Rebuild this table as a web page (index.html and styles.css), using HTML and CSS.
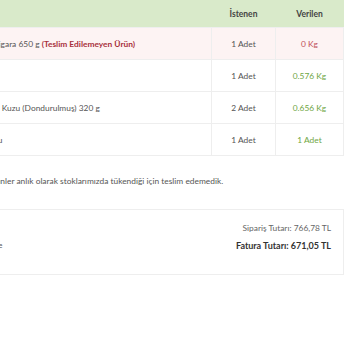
FILE: index.html
```html
<!DOCTYPE html>
<html lang="tr">
<head>
<meta charset="utf-8">
<link rel="stylesheet" href="styles.css">
</head>
<body>
<div class="viewport">
  <div class="page">
    <table class="items">
      <colgroup>
        <col class="col-name">
        <col class="col-qty">
        <col class="col-given">
      </colgroup>
      <thead>
        <tr>
          <th class="c-name">Ürün</th>
          <th class="c-qty">İstenen</th>
          <th class="c-given">Verilen</th>
        </tr>
      </thead>
      <tbody>
        <tr class="missing">
          <td class="c-name">Kuzu Ciğerli Sigara 650 g <b class="miss-tag">(Teslim Edilemeyen Ürün)</b></td>
          <td class="c-qty">1 Adet</td>
          <td class="c-given red">0 Kg</td>
        </tr>
        <tr>
          <td class="c-name">Dana Kıyma</td>
          <td class="c-qty">1 Adet</td>
          <td class="c-given green">0.576 Kg</td>
        </tr>
        <tr>
          <td class="c-name">Kemiksiz İncik Kuzu (Dondurulmuş) 320 g</td>
          <td class="c-qty">2 Adet</td>
          <td class="c-given green">0.656 Kg</td>
        </tr>
        <tr>
          <td class="c-name">İnce Kaya Tuzu</td>
          <td class="c-qty">1 Adet</td>
          <td class="c-given green">1 Adet</td>
        </tr>
      </tbody>
    </table>
    <p class="note">Yukarıdaki ürünler anlık olarak stoklarımızda tükendiği için teslim edemedik.</p>
    <div class="summary">
      <div class="sum-left">
        <div class="line">Ödeme:</div>
        <div class="line">Kapıda Ödeme</div>
      </div>
      <div class="sum-right">
        <div class="line muted">Sipariş Tutarı: 766,78 TL</div>
        <div class="line strong">Fatura Tutarı: 671,05 TL</div>
      </div>
    </div>
  </div>
</div>
</body>
</html>
```
FILE: styles.css
```css
html, body {
  margin: 0;
  padding: 0;
  background: #ffffff;
}
body {
  font-family: "Lato", "Open Sans", sans-serif;
  font-size: 8.4px;
  color: #555555;
  overflow: hidden;
  width: 350px;
  height: 350px;
}
.viewport {
  width: 350px;
  height: 350px;
  overflow: hidden;
}
.page {
  display: flex;
  flex-direction: column;
  width: 404px;
  margin-left: -60px;
}
.items {
  width: 100%;
  border-collapse: collapse;
  table-layout: fixed;
}
.col-qty { width: 64px; }
.col-given { width: 68px; }
.items th {
  background: #d9eaca;
  color: #444444;
  font-weight: 700;
  height: 27px;
  padding: 0 8px;
  font-size: 8.5px;
  border: none;
}
.items td {
  height: 32px;
  padding: 0 8px;
  border-top: 1px solid #eeeeee;
  border-bottom: 1px solid #eeeeee;
  box-sizing: border-box;
  white-space: nowrap;
}
.items .c-name {
  text-align: left;
  overflow: hidden;
}
.items .c-qty {
  text-align: center;
  border-left: 1px solid #eeeeee;
}
.items .c-given {
  text-align: center;
  border-left: 1px solid #eeeeee;
  border-right: 1px solid #eeeeee;
}
.items th.c-qty, .items th.c-given {
  border-left: none;
  border-right: none;
}
.items tr.missing td {
  background: #fdf3f3;
}
.miss-tag {
  color: #a8303c;
  font-weight: 700;
}
.red { color: #c0505a; }
.green { color: #6fa644; }
.note {
  margin: 18px 0 0 0;
  padding-left: 8px;
  line-height: 15px;
  white-space: nowrap;
}
.summary {
  margin-top: 20px;
  border: 1px solid #eeeeee;
  display: flex;
  justify-content: space-between;
  padding: 10px 12px 20px 7px;
  height: 66px;
  box-sizing: border-box;
}
.line {
  line-height: 17px;
  white-space: nowrap;
}
.sum-right {
  text-align: right;
}
.muted { color: #666666; }
.strong { color: #333333; font-weight: 700; font-size: 9px; }
```
